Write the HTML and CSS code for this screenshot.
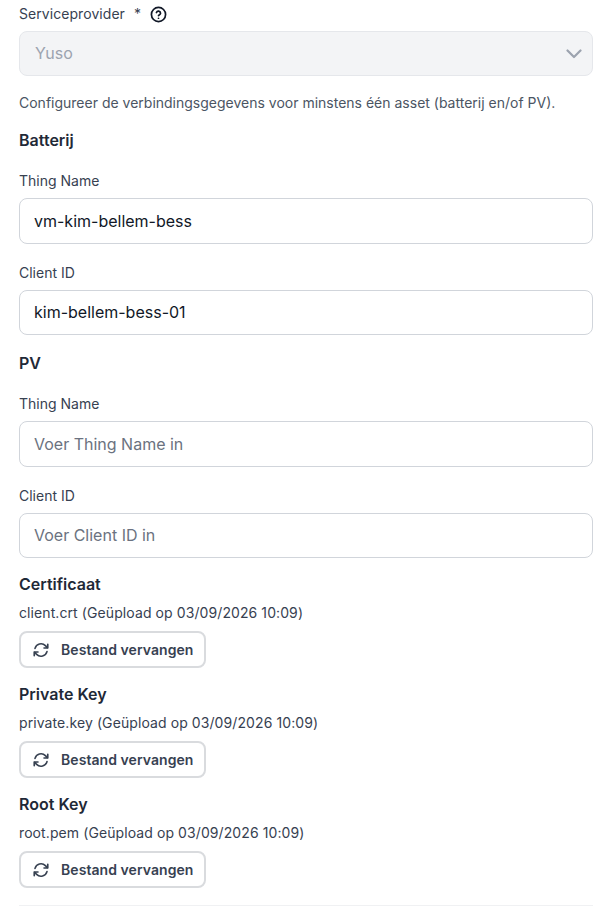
FILE: index.html
```html
<!DOCTYPE html>
<html lang="nl">
<head>
<meta charset="utf-8">
<title>Serviceprovider</title>
<link rel="stylesheet" href="styles.css">
</head>
<body>
<form class="form">
  <div class="field">
    <label class="label label-req">Serviceprovider <span class="star">*</span>
      <svg class="help" viewBox="0 0 24 24" width="17" height="17" fill="none" stroke="#111827" stroke-width="2.4" stroke-linecap="round" stroke-linejoin="round"><circle cx="12" cy="12" r="10"/><path d="M9.100 9.200a3 3 0 0 1 5.800 1c0 2-2.900 2.500-2.900 3.300"/><path d="M12 17.300h.01"/></svg>
    </label>
    <div class="select">
      <span class="select-value">Yuso</span>
      <svg class="chevron" viewBox="0 0 16 10" width="16" height="10" fill="none" stroke="#9ca3af" stroke-width="2.2" stroke-linecap="round" stroke-linejoin="round"><path d="M1.500 1.500 8 8l6.500-6.500"/></svg>
    </div>
  </div>
  <p class="hint">Configureer de verbindingsgegevens voor minstens één asset (batterij en/of PV).</p>
  <h3 class="section section-first">Batterij</h3>
  <div class="field field-gap"><label class="label">Thing Name</label><input class="input" value="vm-kim-bellem-bess"></div>
  <div class="field field-gap"><label class="label">Client ID</label><input class="input" value="kim-bellem-bess-01"></div>
  <h3 class="section">PV</h3>
  <div class="field field-gap"><label class="label">Thing Name</label><input class="input" placeholder="Voer Thing Name in"></div>
  <div class="field field-gap"><label class="label">Client ID</label><input class="input" placeholder="Voer Client ID in"></div>

  <div class="file">
    <h3 class="file-title">Certificaat</h3>
    <p class="file-name">client.crt (Geüpload op 03/09/2026 10:09)</p>
    <button type="button" class="btn"><svg class="btn-icon" viewBox="0 0 24 24" width="18" height="18" fill="none" stroke="#374151" stroke-width="2.2" stroke-linecap="round" stroke-linejoin="round"><path d="M16.023 9.348h4.992M2.985 19.644v-4.992m0 0h4.992m-4.993 0 3.181 3.183a8.250 8.250 0 0 0 13.803-3.700M4.031 9.865a8.250 8.250 0 0 1 13.803-3.700l3.181 3.182m0-4.991v4.990"/></svg>Bestand vervangen</button>
  </div>
  <div class="file">
    <h3 class="file-title">Private Key</h3>
    <p class="file-name">private.key (Geüpload op 03/09/2026 10:09)</p>
    <button type="button" class="btn"><svg class="btn-icon" viewBox="0 0 24 24" width="18" height="18" fill="none" stroke="#374151" stroke-width="2.2" stroke-linecap="round" stroke-linejoin="round"><path d="M16.023 9.348h4.992M2.985 19.644v-4.992m0 0h4.992m-4.993 0 3.181 3.183a8.250 8.250 0 0 0 13.803-3.700M4.031 9.865a8.250 8.250 0 0 1 13.803-3.700l3.181 3.182m0-4.991v4.990"/></svg>Bestand vervangen</button>
  </div>
  <div class="file">
    <h3 class="file-title">Root Key</h3>
    <p class="file-name">root.pem (Geüpload op 03/09/2026 10:09)</p>
    <button type="button" class="btn"><svg class="btn-icon" viewBox="0 0 24 24" width="18" height="18" fill="none" stroke="#374151" stroke-width="2.2" stroke-linecap="round" stroke-linejoin="round"><path d="M16.023 9.348h4.992M2.985 19.644v-4.992m0 0h4.992m-4.993 0 3.181 3.183a8.250 8.250 0 0 0 13.803-3.700M4.031 9.865a8.250 8.250 0 0 1 13.803-3.700l3.181 3.182m0-4.991v4.990"/></svg>Bestand vervangen</button>
  </div>
  <hr class="divider">
</form>
</body>
</html>
```
FILE: styles.css
```css
* { box-sizing: border-box; }
html, body { margin: 0; padding: 0; background: #fff; overflow: hidden; }
body { font-family: Inter, "Liberation Sans", sans-serif; color: #111827; height: 920px; }
.form { padding: 4px 17px 0 19px; display: flex; flex-direction: column; }
.field { display: flex; flex-direction: column; gap: 7px; }
.field-gap { margin-top: 19px; }
.label { font-size: 14px; line-height: 20px; color: #374151; font-weight: 400; display: flex; align-items: center; }
.label-req { white-space: pre; letter-spacing: .06px; }
.star { margin-left: 5px; }
.help { margin-left: 9px; }
.select { height: 45px; background: #f3f4f6; border: 1px solid #e5e7eb; border-radius: 8px; display: flex; align-items: center; justify-content: space-between; padding: 0 10px 2px 15px; }
.select-value { font-size: 16px; line-height: 24px; color: #9ca3af; }
.chevron { display: block; margin-top: 2px; }
.hint { margin: 17px 0 0; font-size: 14px; line-height: 20px; color: #4b5563; }
.section { margin: 16px 0 0; font-size: 16px; line-height: 24px; font-weight: 600; color: #1f2937; }
.section-first { margin-top: 15px; }
.input { display: block; width: 100%; height: 45.500px; border: 1px solid #d1d5db; border-radius: 8px; padding: 0 14px; font: 400 16px/24px Inter, "Liberation Sans", sans-serif; color: #111827; background: #fff; outline: none; }
.input::placeholder { color: #6b7280; opacity: 1; }
.file { margin-top: 14px; display: flex; flex-direction: column; align-items: flex-start; }
.file-title { margin: 0; font-size: 16px; line-height: 24px; font-weight: 600; color: #1f2937; }
.file-name { margin: 7px 0 0; font-size: 14px; line-height: 20px; color: #374151; letter-spacing: .09px; }
.btn { margin-top: 8px; height: 37px; display: inline-flex; align-items: center; gap: 11px; padding: 0 11px 0 12px; background: #fff; border: 2px solid #d9dbde; border-radius: 8px; font: 600 14px/20px Inter, "Liberation Sans", sans-serif; letter-spacing: .06px; color: #374151; }
.btn-icon { display: block; flex: none; margin-left: -1px; }
.divider { width: 100%; margin: 17px 0 0; border: 0; border-top: 1px solid #f0f1f3; }
```
